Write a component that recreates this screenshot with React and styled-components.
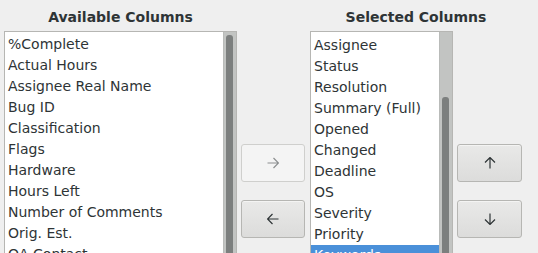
import React from "react";
import styled, { createGlobalStyle } from "styled-components";

const Global = createGlobalStyle`
  html, body { margin: 0; padding: 0; background: #efefef; overflow: hidden; }
  body { font-family: "DejaVu Sans", "Liberation Sans", sans-serif; color: #2e3436; }
`;

const Page = styled.div`
  display: flex;
  align-items: flex-start;
  padding-left: 4px;
  height: 253px;
  overflow: hidden;
`;

const Section = styled.div`
  display: flex;
  flex-direction: column;
  width: ${(p) => p.$width}px;
  margin-left: ${(p) => p.$ml || 0}px;
`;

const Header = styled.div`
  height: 31px;
  display: flex;
  align-items: center;
  justify-content: center;
  font-weight: bold;
  font-size: 14px;
  color: #2e3436;
  padding-top: 2px;
  box-sizing: border-box;
`;

const Row = styled.div`
  display: flex;
  align-items: flex-start;
`;

const Frame = styled.div`
  display: flex;
  width: ${(p) => p.$width}px;
  height: 320px;
  box-sizing: border-box;
  border: 1px solid #b6b6b3;
  background: #fff;
`;

const Body = styled.div`
  flex: 1;
  overflow: hidden;
  padding-top: 2px;
`;

const List = styled.div`
  margin-top: ${(p) => p.$offset || 0}px;
`;

const Item = styled.div`
  height: 21px;
  line-height: 21px;
  font-size: 14px;
  padding-left: 3px;
  white-space: nowrap;
  color: ${(p) => (p.$selected ? "#ffffff" : "#2e3436")};
  background: ${(p) => (p.$selected ? "#4a90d9" : "transparent")};
`;

const Trough = styled.div`
  width: 13px;
  flex: none;
  background: #c2c4c2;
  border-left: 1px solid #b9bbb9;
  box-sizing: border-box;
  padding: ${(p) => p.$thumbTop}px 3px 0 2px;
`;

const Thumb = styled.div`
  width: 7px;
  height: 400px;
  background: #7c7f7e;
  border-radius: 3px 3px 0 0;
`;

const ButtonColumn = styled.div`
  display: flex;
  flex-direction: column;
  gap: 18px;
  padding-top: ${(p) => p.$top}px;
  margin-left: ${(p) => p.$ml}px;
`;

const ArrowButton = styled.button`
  width: ${(p) => p.$width}px;
  height: 38px;
  box-sizing: border-box;
  border-radius: 3px;
  border: 1px solid ${(p) => (p.disabled ? "#cfcfcd" : "#b6b6b3")};
  background: ${(p) =>
    p.disabled ? "#f4f4f4" : "linear-gradient(to bottom, #e9e9e8, #dcdcdb)"};
  color: ${(p) => (p.disabled ? "#8b8e8f" : "#2e3436")};
  display: flex;
  align-items: center;
  justify-content: center;
  padding: 0;
  box-shadow: ${(p) => (p.disabled ? "none" : "inset 0 1px #f4f4f3")};
`;

const paths = {
  right: "M0.5 6 H11.5 M6.5 1 L11.5 6 L6.5 11",
  left: "M11.5 6 H0.5 M5.5 1 L0.5 6 L5.5 11",
  up: "M6 0.5 V11.5 M1 5.5 L6 0.5 L11 5.5",
  down: "M6 11.5 V0.5 M1 6.5 L6 11.5 L11 6.5",
};

function Arrow({ dir }) {
  return (
    <svg width="12" height="12" viewBox="0 0 12 12" fill="none">
      <path d={paths[dir]} stroke="currentColor" strokeWidth="1.2" />
    </svg>
  );
}

const available = [
  "%Complete",
  "Actual Hours",
  "Assignee Real Name",
  "Bug ID",
  "Classification",
  "Flags",
  "Hardware",
  "Hours Left",
  "Number of Comments",
  "Orig. Est.",
  "QA Contact",
  "Reporter",
];

const selected = [
  "Component",
  "Assignee",
  "Status",
  "Resolution",
  "Summary (Full)",
  "Opened",
  "Changed",
  "Deadline",
  "OS",
  "Severity",
  "Priority",
  "Keywords",
  "Product",
];

export default function App() {
  return (
    <>
      <Global />
      <Page>
        <Section $width={233}>
          <Header>Available Columns</Header>
          <Frame $width={233}>
            <Body>
              <List>
                {available.map((a) => (
                  <Item key={a}>{a}</Item>
                ))}
              </List>
            </Body>
            <Trough $thumbTop={3}>
              <Thumb />
            </Trough>
          </Frame>
        </Section>
        <ButtonColumn $top={144} $ml={4}>
          <ArrowButton $width={64} disabled aria-label="Add">
            <Arrow dir="right" />
          </ArrowButton>
          <ArrowButton $width={64} aria-label="Remove">
            <Arrow dir="left" />
          </ArrowButton>
        </ButtonColumn>
        <Section $width={212} $ml={5}>
          <Header>Selected Columns</Header>
          <Row>
            <Frame $width={143}>
              <Body>
                <List $offset={-20}>
                  {selected.map((s) => (
                    <Item key={s} $selected={s === "Keywords"}>
                      {s}
                    </Item>
                  ))}
                </List>
              </Body>
              <Trough $thumbTop={65}>
                <Thumb />
              </Trough>
            </Frame>
            <ButtonColumn $top={113} $ml={4}>
              <ArrowButton $width={65} aria-label="Move up">
                <Arrow dir="up" />
              </ArrowButton>
              <ArrowButton $width={65} aria-label="Move down">
                <Arrow dir="down" />
              </ArrowButton>
            </ButtonColumn>
          </Row>
        </Section>
      </Page>
    </>
  );
}
